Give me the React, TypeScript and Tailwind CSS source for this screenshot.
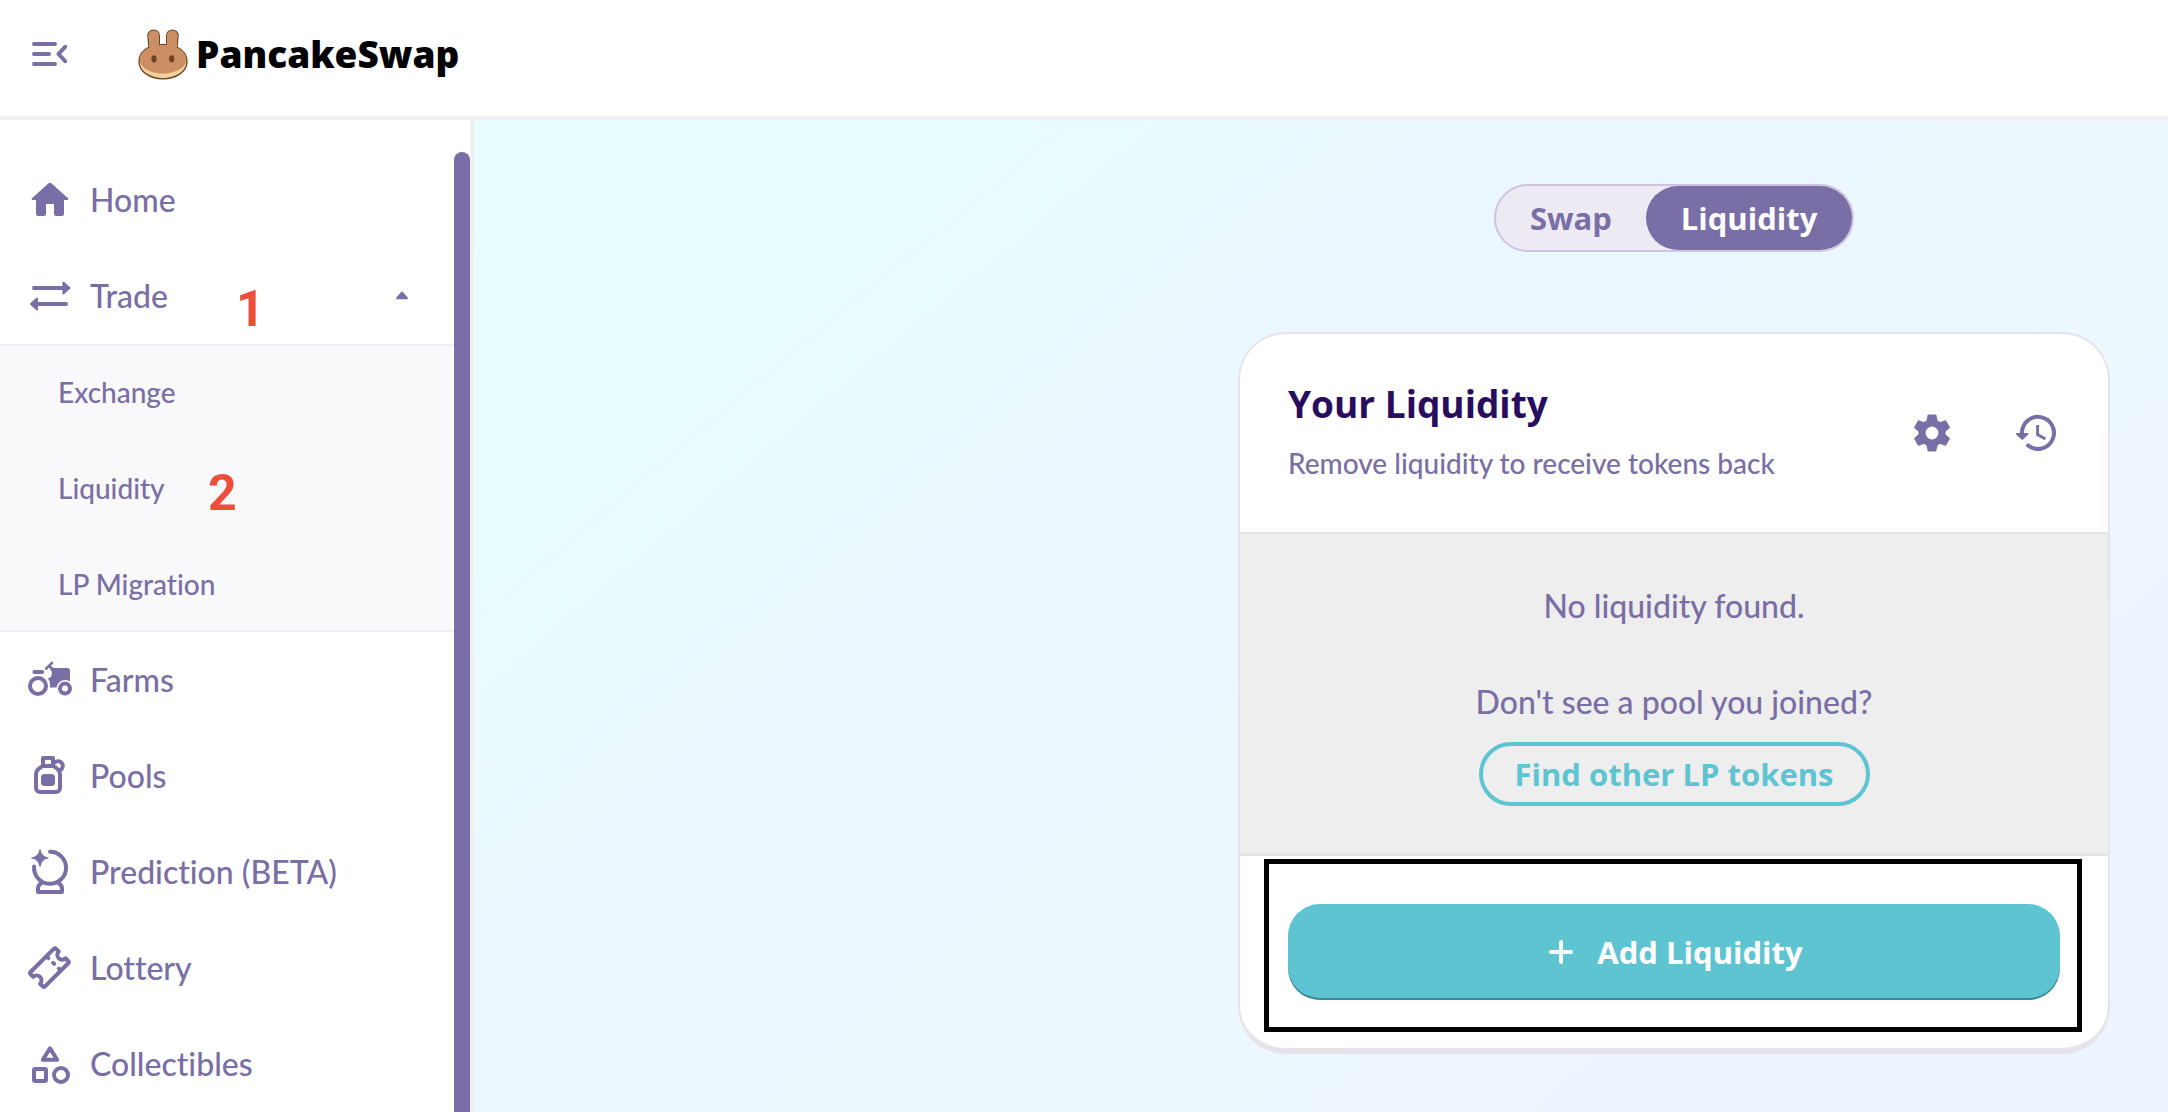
import type { ReactNode } from "react";

function Icon({ children }: { children: ReactNode }) {
  return (
    <svg
      viewBox="0 0 24 24"
      fill="none"
      stroke="currentColor"
      strokeWidth="2"
      strokeLinecap="round"
      strokeLinejoin="round"
      aria-hidden="true"
      className="size-12 shrink-0"
    >
      {children}
    </svg>
  );
}

const MenuIcon = () => (
  <Icon>
    <path d="M4 7h10.5M4 12h7.5M4 17h10.5M19.6 8.4 16.2 12l3.4 3.6" />
  </Icon>
);

const HomeIcon = () => (
  <Icon>
    <path
      fill="currentColor"
      stroke="none"
      d="M10 19v-5h4v5c0 .55.45 1 1 1h3c.55 0 1-.45 1-1v-7h1.7c.46 0 .68-.57.33-.87L12.67 3.6c-.38-.34-.96-.34-1.34 0l-8.36 7.53c-.34.3-.13.87.33.87H5v7c0 .55.45 1 1 1h3c.55 0 1-.45 1-1z"
    />
  </Icon>
);

const TradeIcon = () => (
  <Icon>
    <path d="M4 8h15M20 16H5" />
    <path fill="currentColor" strokeWidth="1" d="M18.7 5.3v5.4L21.7 8zM5.5 13.3v5.4L2.5 16z" />
  </Icon>
);

const FarmIcon = () => (
  <Icon>
    <circle cx="6" cy="15" r="4" />
    <circle cx="19.5" cy="16.3" r="2.5" />
    <path d="M4.2 8h3.9" />
    <path strokeWidth="1.3" d="m10.1 6.3 2.9-2.9M11.6 4.9l1.6 1.6" />
    <path
      fill="currentColor"
      stroke="none"
      d="M13 6h7.5a1.5 1.5 0 0 1 1.5 1.5v5.2a4.3 4.3 0 0 0-6.7 3.1H12v-1.9a5.9 5.9 0 0 0-1-2.8c1.2-.2 1.9-.9 1.9-2.1V8c0-.5-.4-.8-.9-1.1z"
    />
  </Icon>
);

const PoolIcon = () => (
  <Icon>
    <path d="M8.5 3h5v4c2 .9 3.5 2.1 3.5 4.3V18a2 2 0 0 1-2 2H7a2 2 0 0 1-2-2v-6.7C5 9.1 6.5 7.9 8.5 7zM8.5 7h5" />
    <path d="M14.5 5.1a2.3 2.3 0 1 1 3 3.7" />
    <rect x="7.5" y="11" width="7" height="6" rx="1.7" fill="currentColor" stroke="none" />
  </Icon>
);

const PredictionIcon = () => (
  <Icon>
    <path d="M12 1.9a8 8 0 1 1-7.95 7.3" />
    <path d="M8 17.4c-1.2.7-2 1.5-2 2.7V22h12v-1.9c0-1.2-.8-2-2-2.7" />
    <path
      fill="currentColor"
      strokeWidth="0.6"
      d="M7 .9C7.4 3.5 8.5 4.6 11.1 5 8.5 5.4 7.4 6.5 7 9.1 6.6 6.5 5.5 5.4 2.9 5 5.5 4.6 6.6 3.5 7 .9z"
    />
  </Icon>
);

const LotteryIcon = () => (
  <Icon>
    <g transform="translate(11.7 11.8) rotate(-45)">
      <path d="M-8.2-5.1H8.2a.8.8 0 0 1 .8.8v1.9a2.4 2.4 0 0 0 0 4.8v1.9a.8.8 0 0 1-.8.8H-8.2a.8.8 0 0 1-.8-.8V2.4a2.4 2.4 0 0 0 0-4.8v-1.9a.8.8 0 0 1 .8-.8z" />
      <path d="M3-4v.3M3-.4v.8M3 3.7V4" />
    </g>
  </Icon>
);

const CollectiblesIcon = () => (
  <Icon>
    <path d="M12 4.2 8.4 9.9h7.2z" />
    <rect x="4" y="14.5" width="6" height="6" rx="0.5" />
    <circle cx="17.5" cy="17.5" r="3.5" />
  </Icon>
);

const CaretUpIcon = () => (
  <Icon>
    <path fill="currentColor" strokeWidth="1" d="M9.5 13.1h5L12 10.3z" />
  </Icon>
);

const CogIcon = () => (
  <Icon>
    <g transform="translate(12 12)">
      <circle r="5" strokeWidth="3.6" />
      {[0, 60, 120, 180, 240, 300].map((angle) => (
        <path
          key={angle}
          transform={`rotate(${angle})`}
          fill="currentColor"
          stroke="none"
          d="M-2.9-5.6-2.2-8.9q.1-.3.4-.3h3.6q.3 0 .4.3l.7 3.3z"
        />
      ))}
    </g>
  </Icon>
);

const HistoryIcon = () => (
  <Icon>
    <path d="M5 12.5a8 8 0 1 1 3 5.7" />
    <path
      fill="currentColor"
      stroke="none"
      d="M2.4 12h5.4c.4 0 .6.5.3.8l-2.6 2.5a.5.5 0 0 1-.7 0l-2.7-2.5c-.3-.3-.1-.8.3-.8z"
    />
    <path strokeWidth="1.5" strokeLinecap="butt" strokeLinejoin="miter" d="M12.8 8v4.8l3.9 2.2" />
  </Icon>
);

const PlusIcon = () => (
  <Icon>
    <path d="M12 7v10M7 12h10" />
  </Icon>
);

const BunnyLogo = () => (
  <svg viewBox="0 0 150 152" aria-hidden="true" className="h-[51px] w-[50px] shrink-0">
    <path
      fill="#f5cf9c"
      stroke="#6b4523"
      strokeWidth="4"
      d="M33 54 30 22C29 9 37 3 47 3s17 7 17 17v27q11-2 22 0V20C86 10 93 3 103 3s18 6 17 19l-3 32c18 9 30 23 30 43 0 30-32 52-72 52S3 127 3 97c0-20 12-34 30-43z"
    />
    <path
      fill="#cc8f63"
      d="M35 55 32 22C31 11 38 5 47 5s15 6 15 15v29q13-2 26 0V20C88 11 94 5 103 5s16 6 15 17l-3 33c18 8 30 20 30 36 0 23-31 42-70 42S5 114 5 91c0-16 12-28 30-36z"
    />
    <ellipse cx="48" cy="89" rx="8" ry="11" fill="#6b4523" />
    <ellipse cx="101" cy="89" rx="8" ry="11" fill="#6b4523" />
  </svg>
);

const rowClass = "flex h-24 w-full items-center gap-4 pl-[26px] pr-7 text-left text-[32px]";

function StepMark({ children, className }: { children: ReactNode; className: string }) {
  return (
    <span
      className={`absolute font-['Roboto',sans-serif] text-[50px] leading-none font-bold text-[#ee4f3c] ${className}`}
    >
      {children}
    </span>
  );
}

function NavLink({ icon, label }: { icon: ReactNode; label: string }) {
  return (
    <a href="#" className={rowClass}>
      {icon}
      {label}
    </a>
  );
}

function SubLink({ label, children }: { label: string; children?: ReactNode }) {
  return (
    <a href="#" className="relative flex h-24 items-center pl-[58px] text-[28px]">
      {label}
      {children}
    </a>
  );
}

export default function App() {
  return (
    <div className="flex min-h-screen flex-col bg-white font-['Lato','Open_Sans',sans-serif] font-medium text-[#796ea5] [font-variant-ligatures:none]">
      {/* TOP BAR */}
      <header className="flex h-[120px] items-center gap-16 border-b-4 border-[#f0f0f0] pb-2 pl-[26px]">
        <button type="button" aria-label="Toggle menu">
          <MenuIcon />
        </button>
        <a href="#" className="flex items-center gap-2 font-['Open_Sans',sans-serif] text-[37px] font-extrabold text-black">
          <BunnyLogo />
          PancakeSwap
        </a>
      </header>

      <div className="flex flex-1">
        {/* SIDEBAR */}
        <aside className="flex w-[474px] shrink-0 border-r-4 border-[#f0f0f0] pt-8">
          <nav className="flex-1">
            <NavLink icon={<HomeIcon />} label="Home" />
            <button type="button" aria-expanded="true" className={`relative ${rowClass}`}>
              <TradeIcon />
              <span className="flex-1">Trade</span>
              <CaretUpIcon />
              <StepMark className="top-9 left-[236px]">1</StepMark>
            </button>
            <div className="h-72 border-y-2 border-[#f0f0f2] bg-[#f9f9fb]">
              <div className="-my-0.5">
                <SubLink label="Exchange" />
                <SubLink label="Liquidity">
                  <StepMark className="top-7 left-[208px]">2</StepMark>
                </SubLink>
                <SubLink label="LP Migration" />
              </div>
            </div>
            <NavLink icon={<FarmIcon />} label="Farms" />
            <NavLink icon={<PoolIcon />} label="Pools" />
            <NavLink icon={<PredictionIcon />} label="Prediction (BETA)" />
            <NavLink icon={<LotteryIcon />} label="Lottery" />
            <NavLink icon={<CollectiblesIcon />} label="Collectibles" />
          </nav>
          <div className="w-4 rounded-t-full bg-[#796ea5]" />
        </aside>

        {/* CONTENT */}
        <main className="flex flex-1 justify-end bg-linear-[140deg,#e7fdff_0%,#e7fcff_19%,#ebf7fe_35%,#ecf7fe_66%,#eef4ff_80%] pt-16 pr-[58px]">
          <div className="flex w-full max-w-[872px] flex-col items-center gap-20">
            <div className="flex h-[68px] rounded-full border-2 border-[#cec4e0] bg-[#eeeaf4] font-['Open_Sans',sans-serif] text-[31px] font-bold">
              <button type="button" className="min-w-[150px]">
                Swap
              </button>
              <button type="button" className="min-w-[206px] rounded-full bg-[#796ea5] text-white">
                Liquidity
              </button>
            </div>

            <section className="w-full rounded-[48px] border-2 border-b-[6px] border-[#e6e3ea] bg-white">
              <div className="flex items-center border-b-2 border-[#e4e2e9] p-12">
                <div className="flex-1">
                  <h1 className="mb-4 font-['Open_Sans',sans-serif] text-[37px] leading-[44px] font-bold text-[#280d5f]">
                    Your Liquidity
                  </h1>
                  <p className="text-[28px] leading-[42px]">Remove liquidity to receive tokens back</p>
                </div>
                <div className="flex gap-14">
                  <button type="button" aria-label="Settings">
                    <CogIcon />
                  </button>
                  <button type="button" aria-label="Recent transactions">
                    <HistoryIcon />
                  </button>
                </div>
              </div>

              <div className="flex flex-col items-center bg-[#eeeeee] py-12 text-[32px] leading-[48px]">
                <p className="mb-12">No liquidity found.</p>
                <p className="mb-4">Don't see a pool you joined?</p>
                <button
                  type="button"
                  className="h-16 rounded-full border-4 border-[#5fc4d2] px-8 font-['Open_Sans',sans-serif] text-[31px] leading-none font-bold text-[#5fc4d2]"
                >
                  Find other LP tokens
                </button>
              </div>

              <div className="border-t-2 border-[#e4e2e9] pt-[3px] pr-[26px] pb-4 pl-6">
                <div className="border-[5px] border-black pt-10 pr-[17px] pb-[27px] pl-[19px]">
                  <button
                    type="button"
                    className="flex h-24 w-full items-center justify-center gap-3 rounded-[32px] bg-[#5fc4d2] pr-2 font-['Open_Sans',sans-serif] text-[31px] font-bold text-white shadow-[inset_0_-2px_0_#41879a]"
                  >
                    <PlusIcon />
                    Add Liquidity
                  </button>
                </div>
              </div>
            </section>
          </div>
        </main>
      </div>
    </div>
  );
}
